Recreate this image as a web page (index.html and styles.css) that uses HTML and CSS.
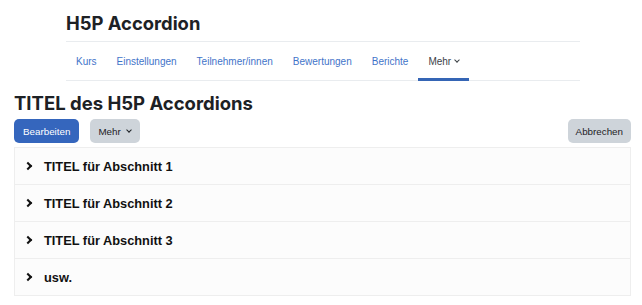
FILE: index.html
```html
<!DOCTYPE html>
<html lang="de">
<head>
    <meta charset="UTF-8">
    <meta name="viewport" content="width=device-width, initial-scale=1.0">
    <title>H5P Accordion</title>
    <link rel="stylesheet" href="styles.css">
</head>
<body>
    <header class="course-header">
        <h1>H5P Accordion</h1>
        <nav class="secondary-nav">
            <a href="#">Kurs</a>
            <a href="#">Einstellungen</a>
            <a href="#">Teilnehmer/innen</a>
            <a href="#">Bewertungen</a>
            <a href="#">Berichte</a>
            <a href="#" class="active">Mehr <span class="caret"></span></a>
        </nav>
    </header>

    <main>
        <h2>TITEL des H5P Accordions</h2>

        <div class="actions">
            <button class="btn btn-primary">Bearbeiten</button>
            <button class="btn btn-secondary">Mehr <span class="caret"></span></button>
            <button class="btn btn-secondary btn-right">Abbrechen</button>
        </div>

        <div class="accordion">
            <div class="acc-item"><span class="chevron"></span>TITEL für Abschnitt 1</div>
            <div class="acc-item"><span class="chevron"></span>TITEL für Abschnitt 2</div>
            <div class="acc-item"><span class="chevron"></span>TITEL für Abschnitt 3</div>
            <div class="acc-item"><span class="chevron"></span>usw.</div>
        </div>
    </main>
</body>
</html>
```

FILE: styles.css
```css
/* Grundlayout */
body {
    margin: 0;
    padding: 0;
    font-family: Inter, "Liberation Sans", sans-serif;
    background-color: #fff;
    color: #1d2125;
}

.course-header {
    margin-left: 66px;
    width: 514px;
}

h1 {
    margin: 11px 0 6px 0;
    font-size: 18.4px;
    line-height: 24px;
    font-weight: 700;
}

.secondary-nav {
    display: flex;
    border-top: 1px solid #e9ecef;
    border-bottom: 1px solid #e9ecef;
    height: 38px;
}

.secondary-nav a {
    display: flex;
    align-items: center;
    padding: 2px 10px 0 10px;
    font-family: "Liberation Sans", Arial, sans-serif;
    font-size: 10px;
    color: #3f74c9;
    text-decoration: none;
    border-bottom: 3px solid transparent;
    margin-bottom: -1px;
}

.secondary-nav a.active {
    color: #3d4247;
    border-bottom-color: #3565b5;
}

.caret {
    display: inline-block;
    width: 3px;
    height: 3px;
    border-right: 1.3px solid currentColor;
    border-bottom: 1.3px solid currentColor;
    transform: rotate(45deg);
    margin: -3px 0 0 4px;
}

main {
    padding: 0 11px 0 14px;
}

h2 {
    margin: 0;
    padding-top: 11px;
    font-size: 18.5px;
    line-height: 23px;
    font-weight: 700;
}

.actions {
    display: flex;
    gap: 11px;
    margin-top: 4px;
}

.btn {
    display: inline-flex;
    align-items: center;
    height: 24px;
    padding: 0 8px;
    border: none;
    border-radius: 5px;
    font-family: "Liberation Sans", Arial, sans-serif;
    font-size: 9.8px;
    cursor: pointer;
}

.btn-primary {
    background-color: #3566bd;
    color: #fff;
    padding: 0 9px;
}

.btn-secondary {
    background-color: #ced4da;
    color: #1d2125;
}

.btn-secondary .caret {
    margin: -3px 1px 0 6px;
}

.btn-right {
    margin-left: auto;
}

.accordion {
    margin-top: 4px;
    border: 1px solid #eeeeee;
}

.acc-item {
    display: flex;
    align-items: center;
    height: 36px;
    padding-left: 10px;
    background-color: #fcfcfc;
    border-top: 1px solid #eeeeee;
    font-family: "Liberation Sans", Arial, sans-serif;
    font-size: 12.8px;
    font-weight: 700;
    color: #111;
}

.acc-item:first-child {
    border-top: none;
}

.chevron {
    display: inline-block;
    width: 4px;
    height: 4px;
    border-right: 2px solid #111;
    border-top: 2px solid #111;
    transform: rotate(45deg);
    margin-right: 13px;
}
```
